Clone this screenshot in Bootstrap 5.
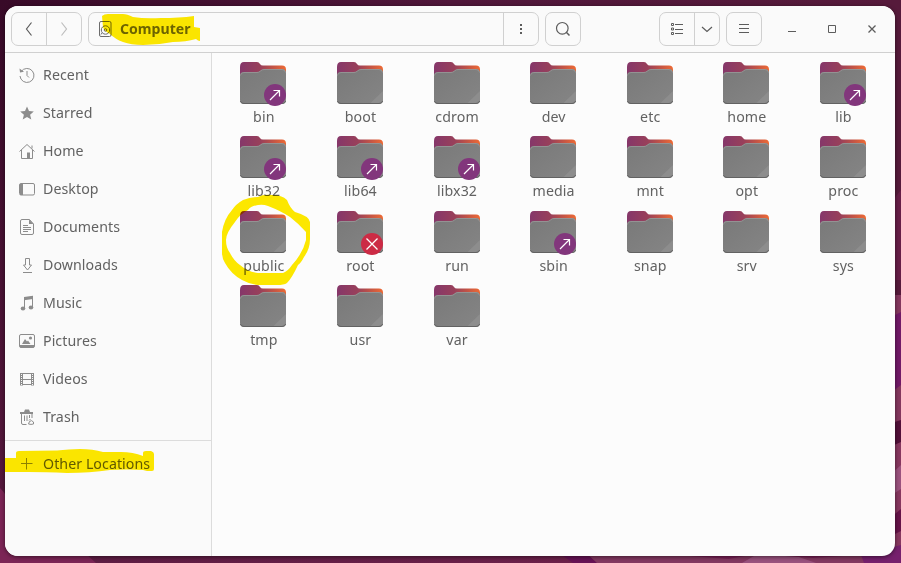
<!DOCTYPE html>
<html lang="en">
<head>
<meta charset="utf-8">
<meta name="viewport" content="width=device-width, initial-scale=1">
<title>Computer</title>
<link rel="stylesheet" href="https://cdn.jsdelivr.net/npm/bootstrap@5.3.0/dist/css/bootstrap.min.css">
<style>
body{width:901px;height:563px;font:14.2px/20px "Noto Sans","Open Sans",sans-serif;color:#5c5c5c;background:#551a3a}
svg{display:block;flex:none;fill:none;stroke:currentColor}
.wallpaper{left:0;top:0;stroke:none}
.files-window{margin:6px 6px 7px 5px;width:890px;height:550px;border-radius:13px;background:#fcfcfc;box-shadow:0 1px 4px rgba(0,0,0,.55)}
.titlebar{height:47px;padding:0 6px;background:#fafafa;border-bottom:1px solid #d0d0d0}
.tool-group{height:34px;border:1px solid #d0d0d0;border-radius:7px;color:#5c5c5c}
.tool{border:0;background:none;color:inherit;padding:0}
.tool+.tool,.location+.tool{border-left:1px solid #d0d0d0}
.w34{width:34px}.w35{width:35px}.w26{width:25px}.w40{width:40px}
.location{width:414px;padding-left:9px;gap:7px;font-weight:700;font-size:14.1px;color:#6c6c6c}
.places{width:207px;background:#fafafa;border-right:1px solid #dcdcdc;padding-top:3px}
.place{height:38px;padding-left:14px;gap:8px;color:#626262}
.place span{letter-spacing:.06px}
.place svg{color:#8c8c8c}
.place-rule{height:1px;background:#dcdcdc;margin:4px 0}
.file-grid{display:grid;grid-template-columns:repeat(7,96.6px);grid-auto-rows:74.35px;padding:9px 0 0 3.15px;align-content:start;color:#626262}
.file-grid span{padding-left:.8px;letter-spacing:.1px}
.folder{width:46px;height:42px;margin-bottom:3px}
.emblem{right:0;bottom:-2px}
.folder>svg{stroke:none}
.emblem{stroke:none}
.marker{mix-blend-mode:multiply;stroke:none;fill:#ffea00;left:0;top:0;pointer-events:none}
</style>
<script src="https://cdn.jsdelivr.net/npm/bootstrap@5.3.0/dist/js/bootstrap.bundle.min.js"></script>
</head>
<body class="overflow-hidden position-relative">
<svg class="wallpaper position-absolute" width="901" height="563">
<defs>
<linearGradient id="wallTop"><stop stop-color="#380a28"/><stop offset=".5" stop-color="#50173a"/><stop offset="1" stop-color="#561a3b"/></linearGradient>
<linearGradient id="wallLeft" x2="0" y2="1"><stop stop-color="#380a28"/><stop offset="1" stop-color="#5a1a40"/></linearGradient>
<linearGradient id="wallBottom"><stop stop-color="#5c1c42"/><stop offset="1" stop-color="#762450"/></linearGradient>
<linearGradient id="tabFill"><stop stop-color="#85376a"/><stop offset=".45" stop-color="#99405a"/><stop offset=".75" stop-color="#c75644"/><stop offset="1" stop-color="#ee6b35"/></linearGradient>
<linearGradient id="frontFill" x2="1" y2="1"><stop stop-color="#797979"/><stop offset="1" stop-color="#858585"/></linearGradient>
<symbol id="folder" viewBox="0 0 46 42">
<path d="M0 5q0-5 4-5h13q2 0 3 2 1 1.500 3 1.500h19q4 0 4 4V20H0z" fill="url(#tabFill)"/>
<path d="M0 13.500Q0 10 4 10h13q2 0 3.500-1.500T24 7h18q4 0 4 4v27q0 4-4 4H4q-4 0-4-4z" fill="url(#frontFill)"/>
<path d="M.5 13.500q0-3 3.500-3h13q2 0 3.500-1.500T24 7.500h18q3 0 3.500 3" fill="none" stroke="#999" stroke-width=".8"/>
<path d="M33 41.500 46 29v9q0 3.500-4 3.500z" fill="#8d8d8d"/>
<path d="M.4 39q.6 2.500 3.600 2.500h38q3 0 3.600-2.500" fill="none" stroke="#626262"/>
</symbol>
<symbol id="link" viewBox="0 0 22 22"><circle cx="11" cy="11" r="11" fill="#82367c"/><path d="M6 16 15.500 6.500M9.500 6.500h6v6" fill="none" stroke="#fff" stroke-width="1.200"/></symbol>
<symbol id="locked" viewBox="0 0 22 22"><circle cx="11" cy="11" r="11" fill="#cc2b45"/><path d="m5.500 5.500 11 11m0-11-11 11" fill="none" stroke="#fff" stroke-width="1.300"/></symbol>
</defs>
<path fill="url(#wallTop)" d="M0 0h901v20H0z"/>
<path fill="url(#wallLeft)" d="M0 0h10v563H0z"/>
<path fill="#561a3b" d="M885 0h16v563h-16z"/>
<path fill="#661e47" d="m885 210 16-20v90h-16z"/>
<path fill="#84375e" d="M885 295h16v128l-16 5z"/>
<path fill="#711967" d="m885 320 16-8v73l-16 12z"/>
<path fill="#521039" d="m885 425 16-5v22l-16 7z"/>
<path fill="#87375f" d="m885 449 16-7v121h-16z"/>
<path fill="#9b527e" d="m890 475 11-10v24l-11 7z"/>
<path fill="#651348" d="m885 522 16-13v22l-16 8z"/>
<path fill="url(#wallBottom)" d="M0 550h901v13H0z"/>
<path fill="#7c2556" d="M0 488q7 7 10 16v50h76l10 9H0z"/>
<path fill="#671255" d="M555 550h28l14 13h-24z"/>
<path fill="#843861" d="m583 550 14 13h270l-10-13z"/>
<path fill="#9a527e" d="m742 563 12-7h42l20 7z"/>
<path fill="#7a2056" d="m690 556h55l-16 3zM785 556h58l-30 2z"/>
<path fill="#76206d" d="m864 563-3-8 40-10v18z"/>
</svg>

<main class="files-window position-relative overflow-hidden d-flex flex-column">
<header class="titlebar d-flex align-items-center">
  <div class="tool-group d-flex" style="margin-right:6px">
    <button class="tool w34 d-flex align-items-center justify-content-center" aria-label="Back"><svg width="16" height="16"><path d="M10.500 1.500 5.500 8l5 6.500" stroke-width="1.200"/></svg></button>
    <button class="tool w35 d-flex align-items-center justify-content-center" aria-label="Forward"><svg width="16" height="16" opacity=".38"><path d="m5.500 1.500 5 6.500-5 6.500" stroke-width="1.200"/></svg></button>
  </div>
  <div class="tool-group d-flex" style="margin-right:6px">
    <div class="location d-flex align-items-center"><svg width="15" height="16"><rect x="1.500" y=".5" width="11.500" height="15" rx="1.500"/><circle cx="7.500" cy="9" r="4.200"/><circle cx="7.500" cy="9" r="1.300"/><path d="m4 12-1 1.500"/></svg><span>Computer</span></div>
    <button class="tool w35 d-flex align-items-center justify-content-center" aria-label="More"><svg width="16" height="16"><path fill="currentColor" stroke="none" d="M7 3h2v2H7zm0 4h2v2H7zm0 4h2v2H7z"/></svg></button>
  </div>
  <div class="tool-group d-flex"><button class="tool w34 d-flex align-items-center justify-content-center" aria-label="Search"><svg width="16" height="16"><circle cx="7.300" cy="7.300" r="5.800" stroke-width="1.200"/><path d="m11.300 11.300 3.200 3.200" stroke-width="1.500"/></svg></button></div>
  <div class="tool-group d-flex ms-auto" style="margin-right:6px">
    <button class="tool w34 d-flex align-items-center justify-content-center" aria-label="List view"><svg width="16" height="16"><path d="M2.500 2.500h2v2h-2zm0 4.500h2v2h-2zm0 4.500h2v2h-2zM6 3.500h8M6 8.500h8M6 12.500h8"/></svg></button>
    <button class="tool w26 d-flex align-items-center justify-content-center" aria-label="View options"><svg width="16" height="16"><path d="m3 6 5 4.500L13 6" stroke-width="1.200"/></svg></button>
  </div>
  <div class="tool-group d-flex" style="margin-right:10px"><button class="tool w34 d-flex align-items-center justify-content-center" aria-label="Menu"><svg width="16" height="16"><path d="M3 3.500h10M3 7.500h10M3 11.500h10"/></svg></button></div>
  <button class="tool w40 border-0 d-flex justify-content-center" aria-label="Minimize"><svg width="16" height="16"><path d="M4 10.500h8"/></svg></button>
  <button class="tool w40 border-0 d-flex justify-content-center" aria-label="Maximize"><svg width="16" height="16"><path d="M4.500 4.500h7v7h-7z"/></svg></button>
  <button class="tool w34 border-0 d-flex justify-content-center" style="margin-left:3px" aria-label="Close"><svg width="16" height="16"><path d="m4.500 4.500 7 7m0-7-7 7" stroke-width="1.300"/></svg></button>
</header>
<div class="d-flex flex-grow-1">
<nav class="places d-flex flex-column">
  <div class="place d-flex align-items-center"><svg width="16" height="16"><path d="M2.200 4.500A7 7 0 1 1 1 9M8 4v4.500l2 2"/><path d="m.5 1.500.500 4 4-.8z" fill="currentColor" stroke="none"/></svg><span>Recent</span></div>
  <div class="place d-flex align-items-center"><svg width="16" height="16"><path fill="currentColor" stroke="none" d="m8 1.500 2 4.600 4.800.4-3.700 3.200 1.200 4.800L8 12l-4.300 2.500 1.200-4.800-3.700-3.200 4.800-.4z"/></svg><span>Starred</span></div>
  <div class="place d-flex align-items-center"><svg width="16" height="16"><path d="M.5 8.500 8 1.500l7.500 7M2.500 7v8.500h11V7M13 2.500v3"/><path d="M8 9.500h3V15H8z" fill="currentColor" stroke="none"/></svg><span>Home</span></div>
  <div class="place d-flex align-items-center"><svg width="16" height="16"><rect x=".5" y="2.500" width="15" height="11.500" rx="1.500"/><path d="M1 3h3v11H1z" fill="currentColor" stroke="none"/></svg><span>Desktop</span></div>
  <div class="place d-flex align-items-center"><svg width="16" height="16"><path d="M3 .5h7.500L14.500 5v9q0 1.500-1.500 1.500H3q-1.500 0-1.500-1.500V2Q1.500.5 3 .5zM4 6.500h5M4 8.500h8M4 10.500h8M4 12.500h5"/><path d="M10 .5V5h4.500z" fill="currentColor" stroke="none"/></svg><span>Documents</span></div>
  <div class="place d-flex align-items-center"><svg width="16" height="16"><path d="M6.500 1.500h4V8h2l-4 5-4-5h2zM4 15.500h9"/></svg><span>Downloads</span></div>
  <div class="place d-flex align-items-center"><svg width="16" height="16"><path d="M5.500 13V3.500l8-1.500v10"/><path d="M5 2 14 .8V4L5 5.200z" fill="currentColor" stroke="none"/><ellipse cx="4" cy="13.500" rx="2.300" ry="1.900" fill="currentColor" stroke="none"/><ellipse cx="12" cy="12.500" rx="2.300" ry="1.900" fill="currentColor" stroke="none"/></svg><span>Music</span></div>
  <div class="place d-flex align-items-center"><svg width="16" height="16"><rect x=".5" y="1.500" width="15" height="13" rx="1.500"/><path d="M1 12h14v2.500H1zM3 11l3-5 2 2.500 1-1 2.500 3.500z" fill="currentColor" stroke="none"/><circle cx="11.500" cy="5" r="1.600" fill="currentColor" stroke="none"/></svg><span>Pictures</span></div>
  <div class="place d-flex align-items-center"><svg width="16" height="16"><path d="M1.500 2v12.500M14.500 2v12.500M3.500 2v12.500M12.500 2v12.500M3 2.500h10M3 8.500h10M3 13.500h10"/><path d="M2.500 2v12.500m11-12.500v12.500" stroke-dasharray="1 1"/></svg><span>Videos</span></div>
  <div class="place d-flex align-items-center"><svg width="16" height="16"><path d="M2.500 5v9q0 1.500 1.500 1.500h3.500M13 5v4M5.500 6.500V12M8 6.500V12M10.500 6v3M10 11.500l1.500-1.500M9.500 15l1-2.500q2-2 4 .5v2q-2.500.8-5 0z"/><path d="M1 3h13v2H1zM5 3l1-2.500h4L11 3z" fill="currentColor" stroke="none"/></svg><span>Trash</span></div>
  <div class="place-rule"></div>
  <div class="place d-flex align-items-center"><svg width="16" height="16"><path d="M2 7.500h11.500M7.500 2v11.500"/></svg><span>Other Locations</span></div>
</nav>
<section class="file-grid flex-grow-1">
  <div class="d-flex flex-column align-items-center"><div class="folder position-relative"><svg width="46" height="42"><use href="#folder"/></svg><svg class="emblem position-absolute" width="22" height="22"><use href="#link"/></svg></div><span>bin</span></div>
  <div class="d-flex flex-column align-items-center"><div class="folder"><svg width="46" height="42"><use href="#folder"/></svg></div><span>boot</span></div>
  <div class="d-flex flex-column align-items-center"><div class="folder"><svg width="46" height="42"><use href="#folder"/></svg></div><span>cdrom</span></div>
  <div class="d-flex flex-column align-items-center"><div class="folder"><svg width="46" height="42"><use href="#folder"/></svg></div><span>dev</span></div>
  <div class="d-flex flex-column align-items-center"><div class="folder"><svg width="46" height="42"><use href="#folder"/></svg></div><span>etc</span></div>
  <div class="d-flex flex-column align-items-center"><div class="folder"><svg width="46" height="42"><use href="#folder"/></svg></div><span>home</span></div>
  <div class="d-flex flex-column align-items-center"><div class="folder position-relative"><svg width="46" height="42"><use href="#folder"/></svg><svg class="emblem position-absolute" width="22" height="22"><use href="#link"/></svg></div><span>lib</span></div>
  <div class="d-flex flex-column align-items-center"><div class="folder position-relative"><svg width="46" height="42"><use href="#folder"/></svg><svg class="emblem position-absolute" width="22" height="22"><use href="#link"/></svg></div><span>lib32</span></div>
  <div class="d-flex flex-column align-items-center"><div class="folder position-relative"><svg width="46" height="42"><use href="#folder"/></svg><svg class="emblem position-absolute" width="22" height="22"><use href="#link"/></svg></div><span>lib64</span></div>
  <div class="d-flex flex-column align-items-center"><div class="folder position-relative"><svg width="46" height="42"><use href="#folder"/></svg><svg class="emblem position-absolute" width="22" height="22"><use href="#link"/></svg></div><span>libx32</span></div>
  <div class="d-flex flex-column align-items-center"><div class="folder"><svg width="46" height="42"><use href="#folder"/></svg></div><span>media</span></div>
  <div class="d-flex flex-column align-items-center"><div class="folder"><svg width="46" height="42"><use href="#folder"/></svg></div><span>mnt</span></div>
  <div class="d-flex flex-column align-items-center"><div class="folder"><svg width="46" height="42"><use href="#folder"/></svg></div><span>opt</span></div>
  <div class="d-flex flex-column align-items-center"><div class="folder"><svg width="46" height="42"><use href="#folder"/></svg></div><span>proc</span></div>
  <div class="d-flex flex-column align-items-center"><div class="folder"><svg width="46" height="42"><use href="#folder"/></svg></div><span>public</span></div>
  <div class="d-flex flex-column align-items-center"><div class="folder position-relative"><svg width="46" height="42"><use href="#folder"/></svg><svg class="emblem position-absolute" width="22" height="22"><use href="#locked"/></svg></div><span>root</span></div>
  <div class="d-flex flex-column align-items-center"><div class="folder"><svg width="46" height="42"><use href="#folder"/></svg></div><span>run</span></div>
  <div class="d-flex flex-column align-items-center"><div class="folder position-relative"><svg width="46" height="42"><use href="#folder"/></svg><svg class="emblem position-absolute" width="22" height="22"><use href="#link"/></svg></div><span>sbin</span></div>
  <div class="d-flex flex-column align-items-center"><div class="folder"><svg width="46" height="42"><use href="#folder"/></svg></div><span>snap</span></div>
  <div class="d-flex flex-column align-items-center"><div class="folder"><svg width="46" height="42"><use href="#folder"/></svg></div><span>srv</span></div>
  <div class="d-flex flex-column align-items-center"><div class="folder"><svg width="46" height="42"><use href="#folder"/></svg></div><span>sys</span></div>
  <div class="d-flex flex-column align-items-center"><div class="folder"><svg width="46" height="42"><use href="#folder"/></svg></div><span>tmp</span></div>
  <div class="d-flex flex-column align-items-center"><div class="folder"><svg width="46" height="42"><use href="#folder"/></svg></div><span>usr</span></div>
  <div class="d-flex flex-column align-items-center"><div class="folder"><svg width="46" height="42"><use href="#folder"/></svg></div><span>var</span></div>
</section>
</div>
</main>
<!-- Highlighter strokes laid over the window -->
<svg class="marker position-absolute" width="901" height="563">
<path d="M102 16q2-2 6-2h15q4 0 10 3 12 2 28 1 18 0 33-2v11l6 1v13q-2 0-4-2-10 3-23 3-15 3-30 3-12 0-20-3-8-3-13-8-6-3-7-7z"/>
<path d="M5 458h11v-5q0-2 3-2l38-.5q12-1.500 23-1.500 13 0 23 3h18q12 0 22 4v-3q0-2 3-2h5q3 1 3 3v15q0 2-2 2h-5l-4-1q-16-1-33 0-20 3-43 3-22-1-39-1H5z"/>
<path fill-rule="evenodd" d="M243 200Q250 197 258 197q5-3 14-2 10 0 15 5 3 8 8 12 14 4 15 10v17q0 10-6 18-3 6-6 8-6 13-11 18-3 2-10 2h-19q-9-1-16-5-11-6-17-17-3-5-3-10v-21q2-13 10-22 4-6 11-10zM258 205q-7 1-10 5-8 4-13 12-9 11-9 18 0 8 4 13 4 8 10 12 8 7 18 8h25q5-2 9-8 11-12 14-25v-8q-7-8-16-15-9-6-22-11-5-2-10-1z"/>
</svg>
</body>
</html>
